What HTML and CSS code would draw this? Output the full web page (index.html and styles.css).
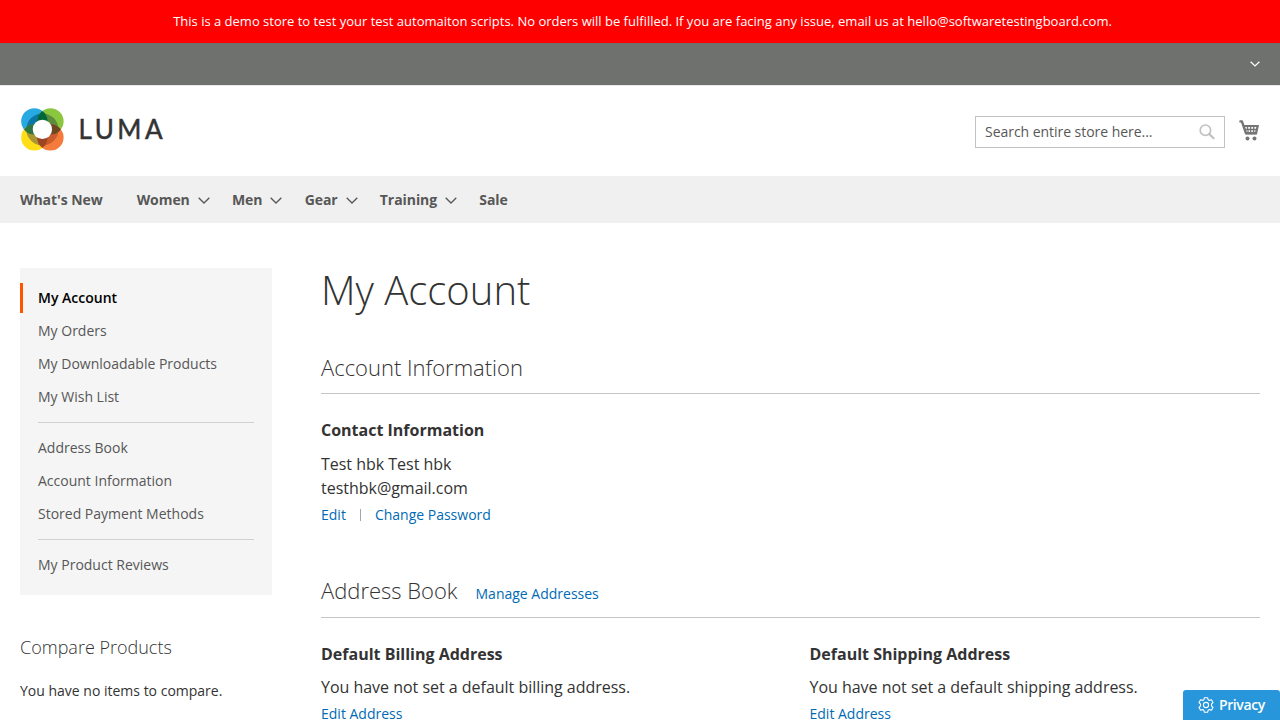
FILE: index.html
```html
<!DOCTYPE html>
<html lang="en">
<head>
<meta charset="utf-8">
<title>My Account</title>
<link rel="stylesheet" href="styles.css">
</head>
<body>
<div class="notice">This is a demo store to test your test automaiton scripts. No orders will be fulfilled. If you are facing any issue, email us at hello@softwaretestingboard.com.</div>
<div class="panel"><svg class="panel-arrow" width="10" height="6" viewBox="0 0 10 6"><path d="M.6.7 5 5 9.4.7"/></svg></div>
<header class="header">
  <a class="logo">
    <svg width="43" height="43" viewBox="0.2 0 43.8 43.8">
      <defs>
        <clipPath id="disc"><circle cx="22" cy="21.8" r="16.3"/></clipPath>
        <clipPath id="tl"><circle cx="13.8" cy="13.6" r="13.4"/></clipPath>
        <clipPath id="br"><circle cx="30.2" cy="30" r="13.4"/></clipPath>
      </defs>
      <circle cx="13.8" cy="13.6" r="13.4" fill="#27a9e1"/>
      <circle cx="30.2" cy="13.6" r="13.4" fill="#8bc63f"/>
      <circle cx="13.8" cy="30" r="13.4" fill="#ffde17"/>
      <circle cx="30.2" cy="30" r="13.4" fill="#f47b3b"/>
      <g clip-path="url(#disc)">
        <circle cx="13.8" cy="13.6" r="13.4" fill="#0b76a5"/>
        <circle cx="30.2" cy="13.6" r="13.4" fill="#5a8c3b"/>
        <circle cx="13.8" cy="30" r="13.4" fill="#a99532"/>
        <circle cx="30.2" cy="30" r="13.4" fill="#c85c2c"/>
      </g>
      <g clip-path="url(#tl)">
        <circle cx="30.2" cy="13.6" r="13.4" fill="#006838"/>
        <circle cx="13.8" cy="30" r="13.4" fill="#2e7540"/>
      </g>
      <g clip-path="url(#br)">
        <circle cx="30.2" cy="13.6" r="13.4" fill="#6b4822"/>
        <circle cx="13.8" cy="30" r="13.4" fill="#9c4522"/>
      </g>
      <circle cx="22" cy="21.8" r="9.8" fill="#fff"/>
    </svg>
    <span class="logo-name">LUMA</span>
  </a>
  <div class="tools">
    <div class="search"><span>Search entire store here...</span>
      <svg width="16" height="16" viewBox="0 0 16 16"><circle cx="6.4" cy="6.2" r="5.2"/><path d="m10.3 10.1 4.3 4.2" stroke-width="2.2" stroke-linecap="round"/></svg>
    </div>
    <svg class="cart" width="20" height="21" viewBox="0 0 20 21">
      <path d="M1.4 1.4h1.5L7 13.3h10" fill="none" stroke="#757575" stroke-width="2.4" stroke-linecap="round" stroke-linejoin="round"/>
      <path d="M4 5h16l-2 9.3H6.6z" fill="#757575"/>
      <path d="M6.2 7h1.7v1.8H6.8zM9.2 7H11v1.8H9.2zM12.3 7h1.8v1.8h-1.8zM15.4 7h1.9l-.4 1.8h-1.5zM7.4 10.3h1v1.8h-.6zM9.6 10.3H11v1.8H9.7zM12.3 10.3h1.6v1.8h-1.6zM15.3 10.3h1.2l-.4 1.8h-.8z" fill="#fff"/>
      <circle cx="8.5" cy="18.5" r="2" fill="#757575"/><circle cx="15.5" cy="18.5" r="2" fill="#757575"/>
    </svg>
  </div>
</header>
<nav class="nav">
  <a class="wide">What's New</a>
  <a>Women<svg width="12" height="7" viewBox="0 0 12 7"><path d="M.7.7 6 6 11.3.7"/></svg></a>
  <a>Men<svg width="12" height="7" viewBox="0 0 12 7"><path d="M.7.7 6 6 11.3.7"/></svg></a>
  <a>Gear<svg width="12" height="7" viewBox="0 0 12 7"><path d="M.7.7 6 6 11.3.7"/></svg></a>
  <a>Training<svg width="12" height="7" viewBox="0 0 12 7"><path d="M.7.7 6 6 11.3.7"/></svg></a>
  <a>Sale</a>
</nav>
<div class="columns">
  <aside class="sidebar">
    <ul class="menu">
      <li class="current">My Account</li>
      <li>My Orders</li>
      <li>My Downloadable Products</li>
      <li>My Wish List</li>
      <li class="rule"></li>
      <li>Address Book</li>
      <li>Account Information</li>
      <li>Stored Payment Methods</li>
      <li class="rule"></li>
      <li>My Product Reviews</li>
    </ul>
    <h3 class="compare-title">Compare Products</h3>
    <p class="compare-text">You have no items to compare.</p>
  </aside>
  <main class="main">
    <h1 class="title">My Account</h1>
    <section class="block">
      <div class="block-head"><h2>Account Information</h2></div>
      <div class="boxes">
        <div class="box">
          <h4>Contact Information</h4>
          <p>Test hbk Test hbk<br>testhbk@gmail.com</p>
          <div class="actions"><a>Edit</a><span class="divider"></span><a>Change Password</a></div>
        </div>
      </div>
    </section>
    <section class="block address">
      <div class="block-head"><h2>Address Book</h2><a>Manage Addresses</a></div>
      <div class="boxes">
        <div class="box">
          <h4>Default Billing Address</h4>
          <p>You have not set a default billing address.</p>
          <div class="actions"><a>Edit Address</a></div>
        </div>
        <div class="box">
          <h4>Default Shipping Address</h4>
          <p>You have not set a default shipping address.</p>
          <div class="actions"><a>Edit Address</a></div>
        </div>
      </div>
    </section>
  </main>
</div>
<div class="privacy">
  <svg width="16" height="16" viewBox="0 0 16 16"><path d="M6.4.7h3.2l.5 2 1.3.7 2-.6L15 5.5l-1.5 1.6v1.8l1.5 1.6-1.6 2.7-2-.6-1.3.7-.5 2H6.4l-.5-2-1.3-.7-2 .6L1 10.5l1.5-1.6V7.1L1 5.5l1.6-2.7 2 .6 1.3-.7z"/><circle cx="8" cy="8" r="2.6"/></svg>
  <span>Privacy</span>
</div>
</body>
</html>
```
FILE: styles.css
```css
* { box-sizing: border-box; margin: 0; padding: 0; }
html, body { height: 720px; overflow: hidden; }
body { background: #fff; color: #333; font: 14px/20px "Open Sans", sans-serif; }
svg { display: block; flex: none; }
a { color: #006bb4; white-space: nowrap; }
.notice { height: 43px; padding-left: 5px; background: #f00; color: #fff; font-size: 13px; line-height: 43px; text-align: center; white-space: nowrap; }
.panel { height: 42px; padding: 18px 20px 0 0; display: flex; justify-content: flex-end; background: #6e716e; }
.panel-arrow { fill: none; stroke: #fff; stroke-width: 1.2; }
.header { height: 91px; padding: 22px 20px 0; border-top: 1px solid #e8e8e8; display: flex; justify-content: space-between; }
.logo { display: flex; height: 43px; padding-left: 1px; align-items: center; }
.logo-name { margin: -1px 0 0 14.5px; color: #333; font: 400 26px/44px Lato, sans-serif; letter-spacing: 3.5px; -webkit-text-stroke: .5px #333; }
.tools { display: flex; gap: 14px; padding-top: 8px; }
.search { width: 250px; height: 32px; padding: 0 9px; border: 1px solid #c2c2c2; display: flex; align-items: center; justify-content: space-between; color: #575757; }
.search span { letter-spacing: -.04px; }
.search svg { fill: none; stroke: #c2c2c2; stroke-width: 1.7; }
.cart { margin: 4px 1px 0 0; }
.nav { height: 47px; padding: 0 20px; display: flex; background: #f0f0f0; }
.nav a { display: flex; align-items: center; margin-right: 22.2px; color: #575757; font-weight: 700; line-height: 47px; letter-spacing: -.06px; }
.nav .wide { margin-right: 34px; }
.nav svg { margin: 2px 0 0 8px; fill: none; stroke: #575757; stroke-width: 1.3; }
.columns { display: flex; gap: 49px; padding: 45px 20px 0; }
.sidebar { width: 252px; flex: none; }
.menu { height: 327px; padding: 15px 0; list-style: none; background: #f5f5f5; }
.menu li { height: 30px; margin-bottom: 3px; padding-left: 18px; line-height: 30px; color: #575757; }
.menu .current { padding-left: 15px; border-left: 3px solid #ff5501; color: #000; font-weight: 600; }
.menu .rule { height: 1px; margin: 10px 18px; padding: 0; background: #d1d1d1; }
.compare-title { margin-top: 41px; font-size: 18px; font-weight: 300; line-height: 22px; }
.compare-text { margin-top: 23px; }
.main { flex: 1; min-width: 0; }
.title { font-size: 40px; font-weight: 300; line-height: 44px; }
.block { margin-top: 40px; }
.block-head { height: 42px; border-bottom: 1px solid #c6c6c6; display: flex; align-items: baseline; gap: 18px; }
.block h2 { font-size: 22px; font-weight: 300; line-height: 30px; }
.boxes { display: flex; padding-top: 24px; }
.box { width: 488.5px; flex: none; }
.box h4 { font-size: 16px; font-weight: 700; line-height: 24px; }
.box p { margin-top: 10px; font-size: 16px; line-height: 24px; letter-spacing: -.02px; }
.actions { display: flex; align-items: center; margin-top: 5px; }
.divider { width: 1px; height: 12px; margin: 0 14px; background: #a6a6a6; }
.address { margin-top: 50px; }
.address .block-head { height: 43px; }
.address .box p { margin-top: 9px; }
.privacy { position: fixed; right: 0; bottom: 0; width: 97px; height: 30px; padding-left: 15px; display: flex; align-items: center; gap: 5px; border-radius: 3px 3px 0 0; background: #2796da; color: #fff; font-weight: 600; letter-spacing: -.4px; }
.privacy svg { fill: none; stroke: #fff; stroke-width: 1.1; stroke-linejoin: round; }
```
